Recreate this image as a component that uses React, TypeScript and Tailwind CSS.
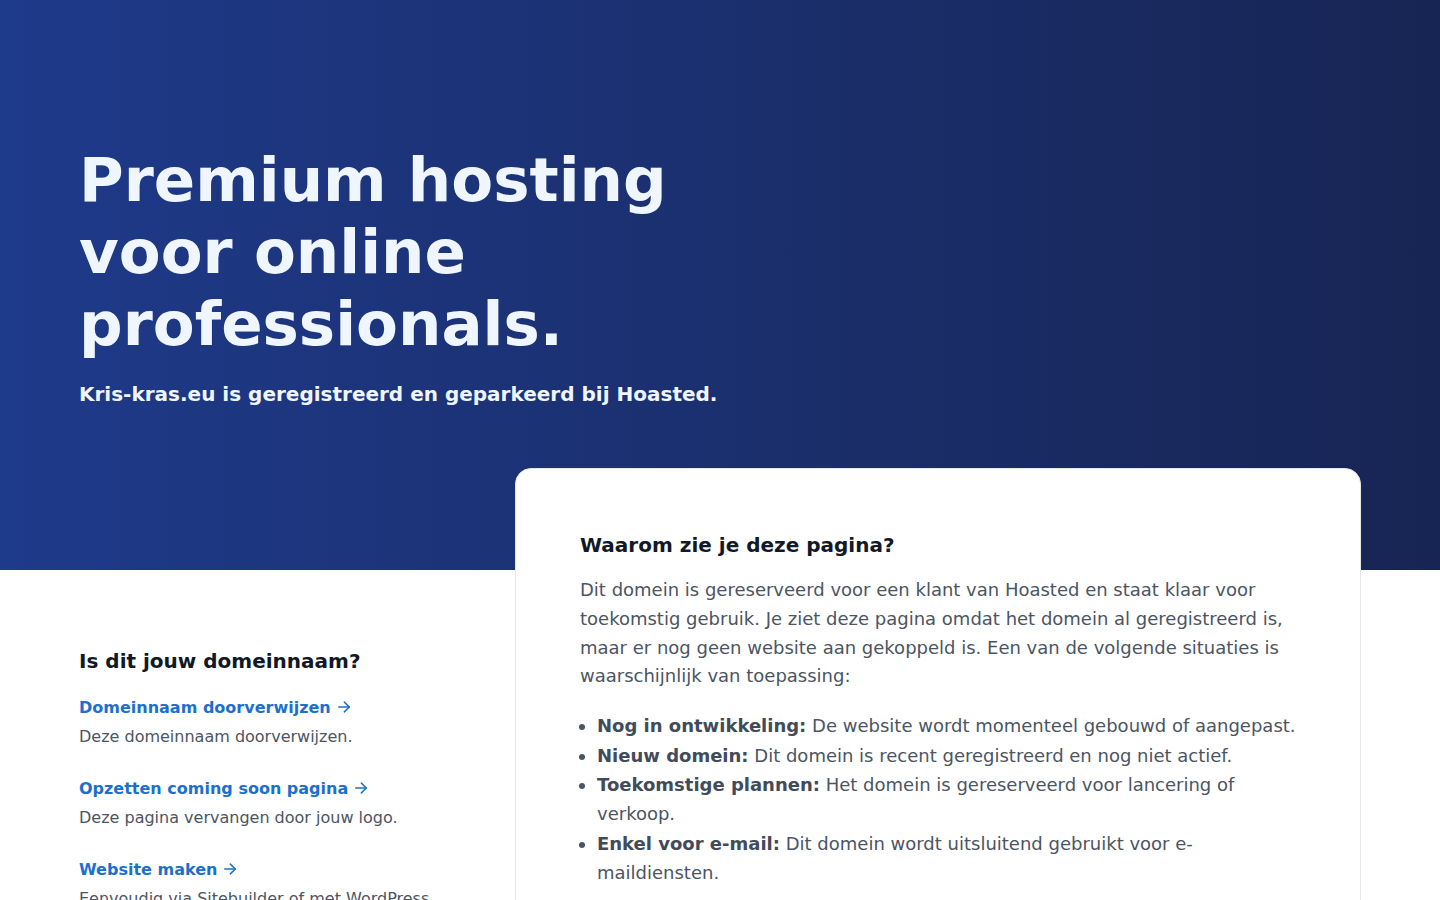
import React from "react";

const links = [
  { title: "Domeinnaam doorverwijzen", desc: "Deze domeinnaam doorverwijzen." },
  { title: "Opzetten coming soon pagina", desc: "Deze pagina vervangen door jouw logo." },
  { title: "Website maken", desc: "Eenvoudig via Sitebuilder of met WordPress." },
];

const items = [
  { b: "Nog in ontwikkeling:", t: "De website wordt momenteel gebouwd of aangepast." },
  { b: "Nieuw domein:", t: "Dit domein is recent geregistreerd en nog niet actief." },
  { b: "Toekomstige plannen:", t: "Het domein is gereserveerd voor lancering of verkoop." },
  { b: "Enkel voor e-mail:", t: "Dit domein wordt uitsluitend gebruikt voor e-maildiensten." },
];

function Arrow() {
  return (
    <svg width="18" height="18" viewBox="0 0 24 24" fill="none" stroke="currentColor" strokeWidth="2" strokeLinecap="round" strokeLinejoin="round" className="inline-block ml-[4px] -mt-[4px]">
      <path d="M5 12h14" />
      <path d="M12.5 5.5L19 12l-6.5 6.5" />
    </svg>
  );
}

export default function App() {
  return (
    <div className="min-h-screen bg-white" style={{ fontFamily: '"DejaVu Sans", sans-serif' }}>
      <header className="h-[570px] bg-gradient-to-r from-[#1e3a8a] to-[#172554]">
        <div className="mx-auto max-w-[1282px] pt-[144px]">
          <h1 className="text-[61px] leading-[72px] font-bold text-[#eff6ff] max-w-[700px]">
            Premium hosting voor online professionals.
          </h1>
          <p className="mt-[20px] text-[20px] leading-[28px] font-bold text-[#eff6ff]">
            Kris-kras.eu is geregistreerd en geparkeerd bij Hoasted.
          </p>
        </div>
      </header>
      <main className="mx-auto max-w-[1282px] flex">
        <div className="w-[436px] shrink-0 pt-[78px]">
          <h2 className="text-[20px] leading-[26px] font-bold text-[#111827]">Is dit jouw domeinnaam?</h2>
          <div className="mt-[22px] flex flex-col gap-[28px]">
            {links.map((l) => (
              <div key={l.title}>
                <a href="#" className="text-[16px] leading-[24px] font-bold text-[#1c6fcd]">
                  {l.title}
                  <Arrow />
                </a>
                <p className="mt-[5px] text-[16px] leading-[24px] text-[#4b5563]">{l.desc}</p>
              </div>
            ))}
          </div>
        </div>
        <section className="-mt-[102px] flex-1 rounded-2xl border border-[#e5e7eb] bg-white pl-[64px] pr-[56px] pt-[62px] pb-[64px]">
          <h2 className="text-[20px] leading-[28px] font-bold text-[#111827]">Waarom zie je deze pagina?</h2>
          <p className="mt-[17px] text-[18px] leading-[1.6] text-[#4b5563]">
            Dit domein is gereserveerd voor een klant van Hoasted en staat klaar voor toekomstig gebruik. Je ziet deze pagina omdat het domein al geregistreerd is, maar er nog geen website aan gekoppeld is. Een van de volgende situaties is waarschijnlijk van toepassing:
          </p>
          <ul className="mt-[20px] list-disc pl-[17px] text-[18px] leading-[29px] text-[#4b5563] max-w-[720px]">
            {items.map((i) => (
              <li key={i.b} className="mb-[0.5px]">
                <strong className="font-bold text-[#414b5a]">{i.b}</strong> {i.t}
              </li>
            ))}
          </ul>
        </section>
      </main>
    </div>
  );
}
